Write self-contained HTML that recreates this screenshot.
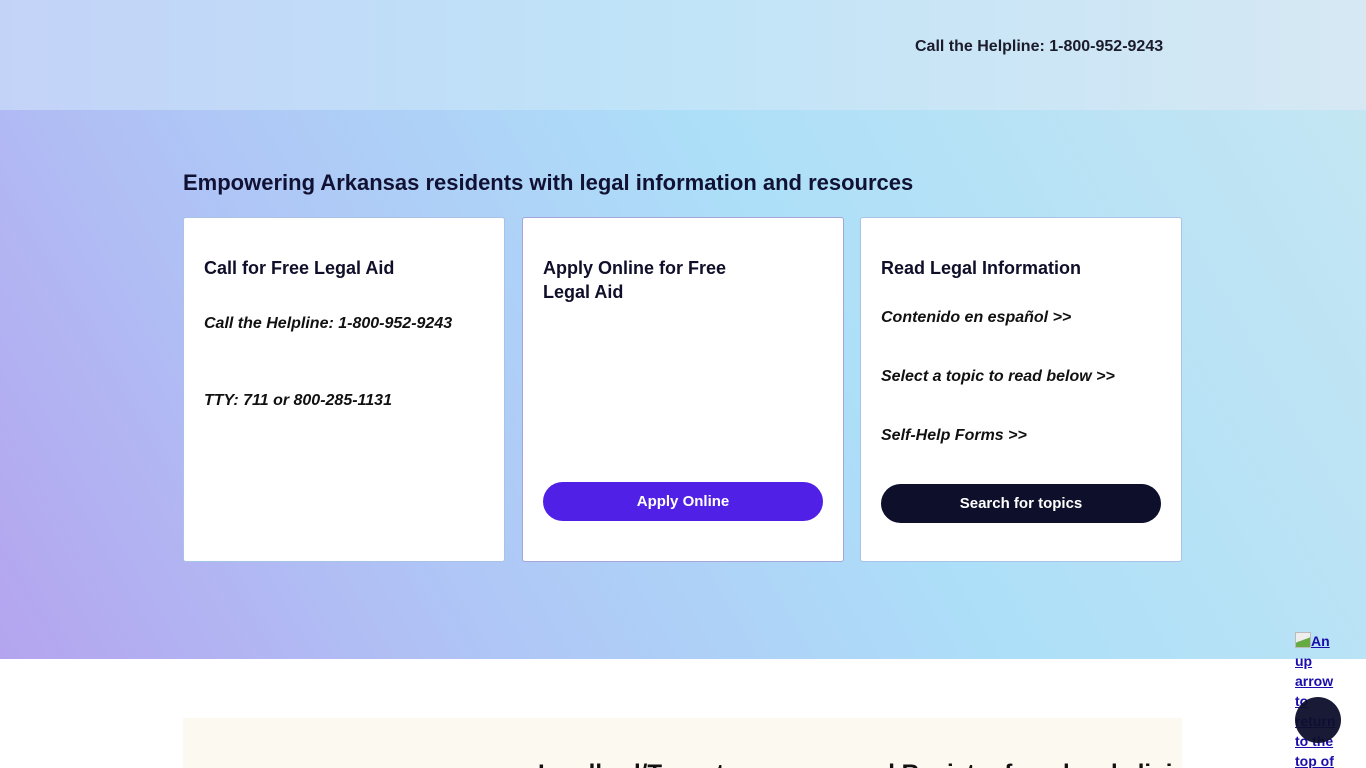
<!DOCTYPE html>
<html style="overflow:hidden;height:768px"><head><meta charset="utf-8"><style>
*{margin:0;padding:0;box-sizing:border-box}
body{width:1366px;height:768px;overflow:hidden;font-family:"Liberation Sans",sans-serif;background:#fff;position:relative;color:#0f0f2a}
.top{position:absolute;left:0;top:0;width:1366px;height:110px;background:linear-gradient(90deg,#c3d3f8 0%,#bfe3f8 45%,#d6e8f3 100%)}
.top .h{position:absolute;left:915px;top:38px;font-size:16px;font-weight:bold;color:#1b1b2b}
.hero{position:absolute;left:0;top:110px;width:1366px;height:549px;background:linear-gradient(60deg,#b4a4ef 0%,#afc6f6 30%,#addff8 60%,#c4e6f3 100%)}
h1{position:absolute;left:183px;top:170px;font-size:22px;font-weight:bold;color:#111133}
.card{position:absolute;top:217px;width:322px;height:345px;background:#fff;border:1px solid #a9c3e6;border-radius:3px}
.card h2{position:absolute;left:20px;top:38px;font-size:18px;font-weight:bold;line-height:24px;color:#0f0f2a}
.card p{position:absolute;left:20px;font-size:16px;font-style:italic;font-weight:bold;color:#111}
.btn{position:absolute;left:20px;width:280px;height:39px;border-radius:20px;color:#fff;font-weight:bold;font-size:15px;text-align:center;line-height:39px}
.sec{position:absolute;left:183px;top:718px;width:999px;height:50px;background:#fcf9f0;overflow:hidden}
.sec div{position:absolute;left:355px;top:42px;font-size:24px;font-weight:bold;white-space:nowrap;color:#111}
.up{position:absolute;left:1295px;top:631px;width:42px;font-size:14px;font-weight:bold;color:#1a0dab;text-decoration:underline;line-height:20px}
.up i{display:inline-block;width:16px;height:16px;border:1px solid #bbb;background:linear-gradient(160deg,#eee 50%,#6a4 50%);vertical-align:-2px}
.circle{position:absolute;left:1295px;top:697px;width:46px;height:46px;border-radius:50%;background:#0d0f2b;opacity:.95}
</style></head><body>
<div class="top"><div class="h">Call the Helpline: 1-800-952-9243</div></div>
<div class="hero"></div>
<h1>Empowering Arkansas residents with legal information and resources</h1>
<div class="card" style="left:183px">
<h2>Call for Free Legal Aid</h2>
<p style="top:97px">Call the Helpline: 1-800-952-9243</p>
<p style="top:174px">TTY: 711 or 800-285-1131</p>
</div>
<div class="card" style="left:522px;border-color:#a5a5d8">
<h2>Apply Online for Free<br>Legal Aid</h2>
<div class="btn" style="top:264px;background:#5020e6">Apply Online</div>
</div>
<div class="card" style="left:860px">
<h2>Read Legal Information</h2>
<p style="top:91px">Contenido en español &gt;&gt;</p>
<p style="top:150px">Select a topic to read below &gt;&gt;</p>
<p style="top:209px">Self-Help Forms &gt;&gt;</p>
<div class="btn" style="top:266px;background:#0d0f2b">Search for topics</div>
</div>
<div class="sec"><div>Landlord/Tenant resources and Register for a legal clinic</div></div>
<div class="up"><i></i>An up arrow to return to the top of</div>
<div class="circle"></div>
</body></html>
